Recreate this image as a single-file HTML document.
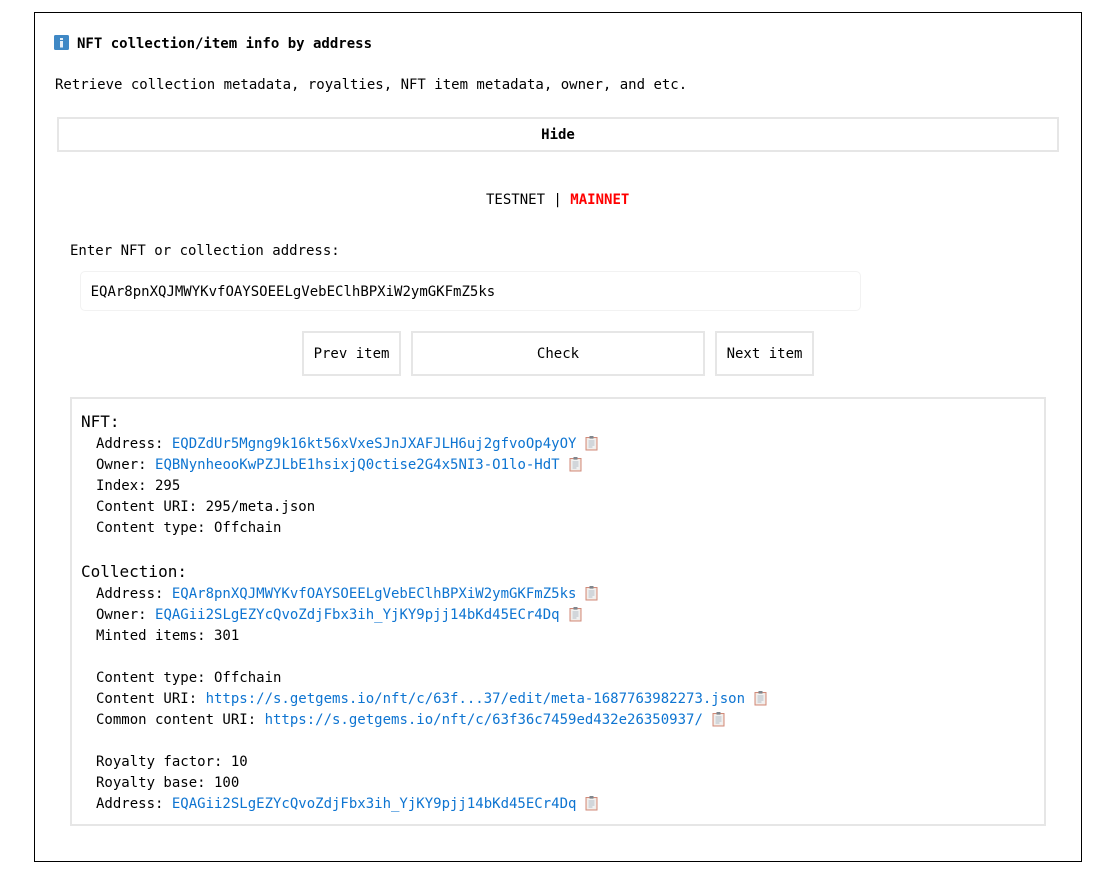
<!DOCTYPE html>
<html><head><meta charset="utf-8">
<style>
html,body{margin:0;padding:0;background:#fff;width:1097px;height:869px;overflow:hidden}
body{font-family:"DejaVu Sans Mono",monospace;font-size:14px;color:#000;position:relative}
.a{position:absolute;white-space:pre;line-height:21px}
.box{position:absolute;box-sizing:border-box;border:2px solid #e6e6e6;background:#fff;text-align:center;white-space:pre}
a{color:#0d74d1;text-decoration:none}
b{font-weight:bold}
.h{font-size:16px}
svg.c{display:inline-block;width:14px;height:15px;vertical-align:-3px;margin-left:8px}
</style></head>
<body>
<svg width="0" height="0" style="position:absolute"><defs>
<symbol id="clip" viewBox="0 0 14 15">
<rect x="2" y="1.5" width="11" height="12.5" fill="#f3e6dc" stroke="#d08a7a" stroke-width="1"/>
<rect x="3.2" y="2.7" width="8.6" height="10.1" fill="#f1f1f1"/>
<rect x="5.5" y="0" width="4" height="2.6" fill="#7f858c"/>
<path d="M4.5 5h6M4.5 7h6M4.5 9h6M4.5 11h4" stroke="#b3bcc4" stroke-width="1"/>
</symbol></defs></svg>

<div style="position:absolute;left:34px;top:12px;width:1048px;height:850px;box-sizing:border-box;border:1px solid #000"></div>

<svg style="position:absolute;left:54px;top:35px" width="15" height="15" viewBox="0 0 15 15"><rect width="15" height="15" rx="1.5" fill="#3f88c5"/><rect x="6" y="3" width="3" height="2" fill="#e6eff7"/><rect x="6" y="6" width="3" height="6.5" fill="#e6eff7"/></svg>
<div class="a" style="left:77px;top:34px"><b>NFT collection/item info by address</b></div>
<div class="a" style="left:55px;top:75px">Retrieve collection metadata, royalties, NFT item metadata, owner, and etc.</div>

<div class="box" style="left:57px;top:117px;width:1002px;height:35px;line-height:33px"><b>Hide</b></div>

<div class="a" style="left:486px;top:190px">TESTNET | <b style="color:#f00">MAINNET</b></div>
<div class="a" style="left:70px;top:241px">Enter NFT or collection address:</div>

<div style="position:absolute;left:80px;top:271px;width:781px;height:40px;box-sizing:border-box;border:1px solid #f2f2f2;border-radius:5px;padding-left:9.6px;line-height:40px;white-space:pre">EQAr8pnXQJMWYKvfOAYSOEELgVebEClhBPXiW2ymGKFmZ5ks</div>

<div class="box" style="left:302px;top:331px;width:99px;height:45px;line-height:43px">Prev item</div>
<div class="box" style="left:411px;top:331px;width:294px;height:45px;line-height:43px">Check</div>
<div class="box" style="left:715px;top:331px;width:99px;height:45px;line-height:43px">Next item</div>

<div style="position:absolute;left:70px;top:397px;width:976px;height:429px;box-sizing:border-box;border:2px solid #e6e6e6"></div>

<div class="a h" style="left:81px;top:411px">NFT:</div>
<div class="a" style="left:96px;top:434px">Address: <a>EQDZdUr5Mgng9k16kt56xVxeSJnJXAFJLH6uj2gfvoOp4yOY</a><svg class="c"><use href="#clip"/></svg></div>
<div class="a" style="left:96px;top:455px">Owner: <a>EQBNynheooKwPZJLbE1hsixjQ0ctise2G4x5NI3-O1lo-HdT</a><svg class="c"><use href="#clip"/></svg></div>
<div class="a" style="left:96px;top:476px">Index: 295</div>
<div class="a" style="left:96px;top:497px">Content URI: 295/meta.json</div>
<div class="a" style="left:96px;top:518px">Content type: Offchain</div>

<div class="a h" style="left:81px;top:561px">Collection:</div>
<div class="a" style="left:96px;top:584px">Address: <a>EQAr8pnXQJMWYKvfOAYSOEELgVebEClhBPXiW2ymGKFmZ5ks</a><svg class="c"><use href="#clip"/></svg></div>
<div class="a" style="left:96px;top:605px">Owner: <a>EQAGii2SLgEZYcQvoZdjFbx3ih_YjKY9pjj14bKd45ECr4Dq</a><svg class="c"><use href="#clip"/></svg></div>
<div class="a" style="left:96px;top:626px">Minted items: 301</div>
<div class="a" style="left:96px;top:668px">Content type: Offchain</div>
<div class="a" style="left:96px;top:689px">Content URI: <a>https://s.getgems.io/nft/c/63f...37/edit/meta-1687763982273.json</a><svg class="c"><use href="#clip"/></svg></div>
<div class="a" style="left:96px;top:710px">Common content URI: <a>https://s.getgems.io/nft/c/63f36c7459ed432e26350937/</a><svg class="c"><use href="#clip"/></svg></div>
<div class="a" style="left:96px;top:752px">Royalty factor: 10</div>
<div class="a" style="left:96px;top:773px">Royalty base: 100</div>
<div class="a" style="left:96px;top:794px">Address: <a>EQAGii2SLgEZYcQvoZdjFbx3ih_YjKY9pjj14bKd45ECr4Dq</a><svg class="c"><use href="#clip"/></svg></div>
</body></html>
